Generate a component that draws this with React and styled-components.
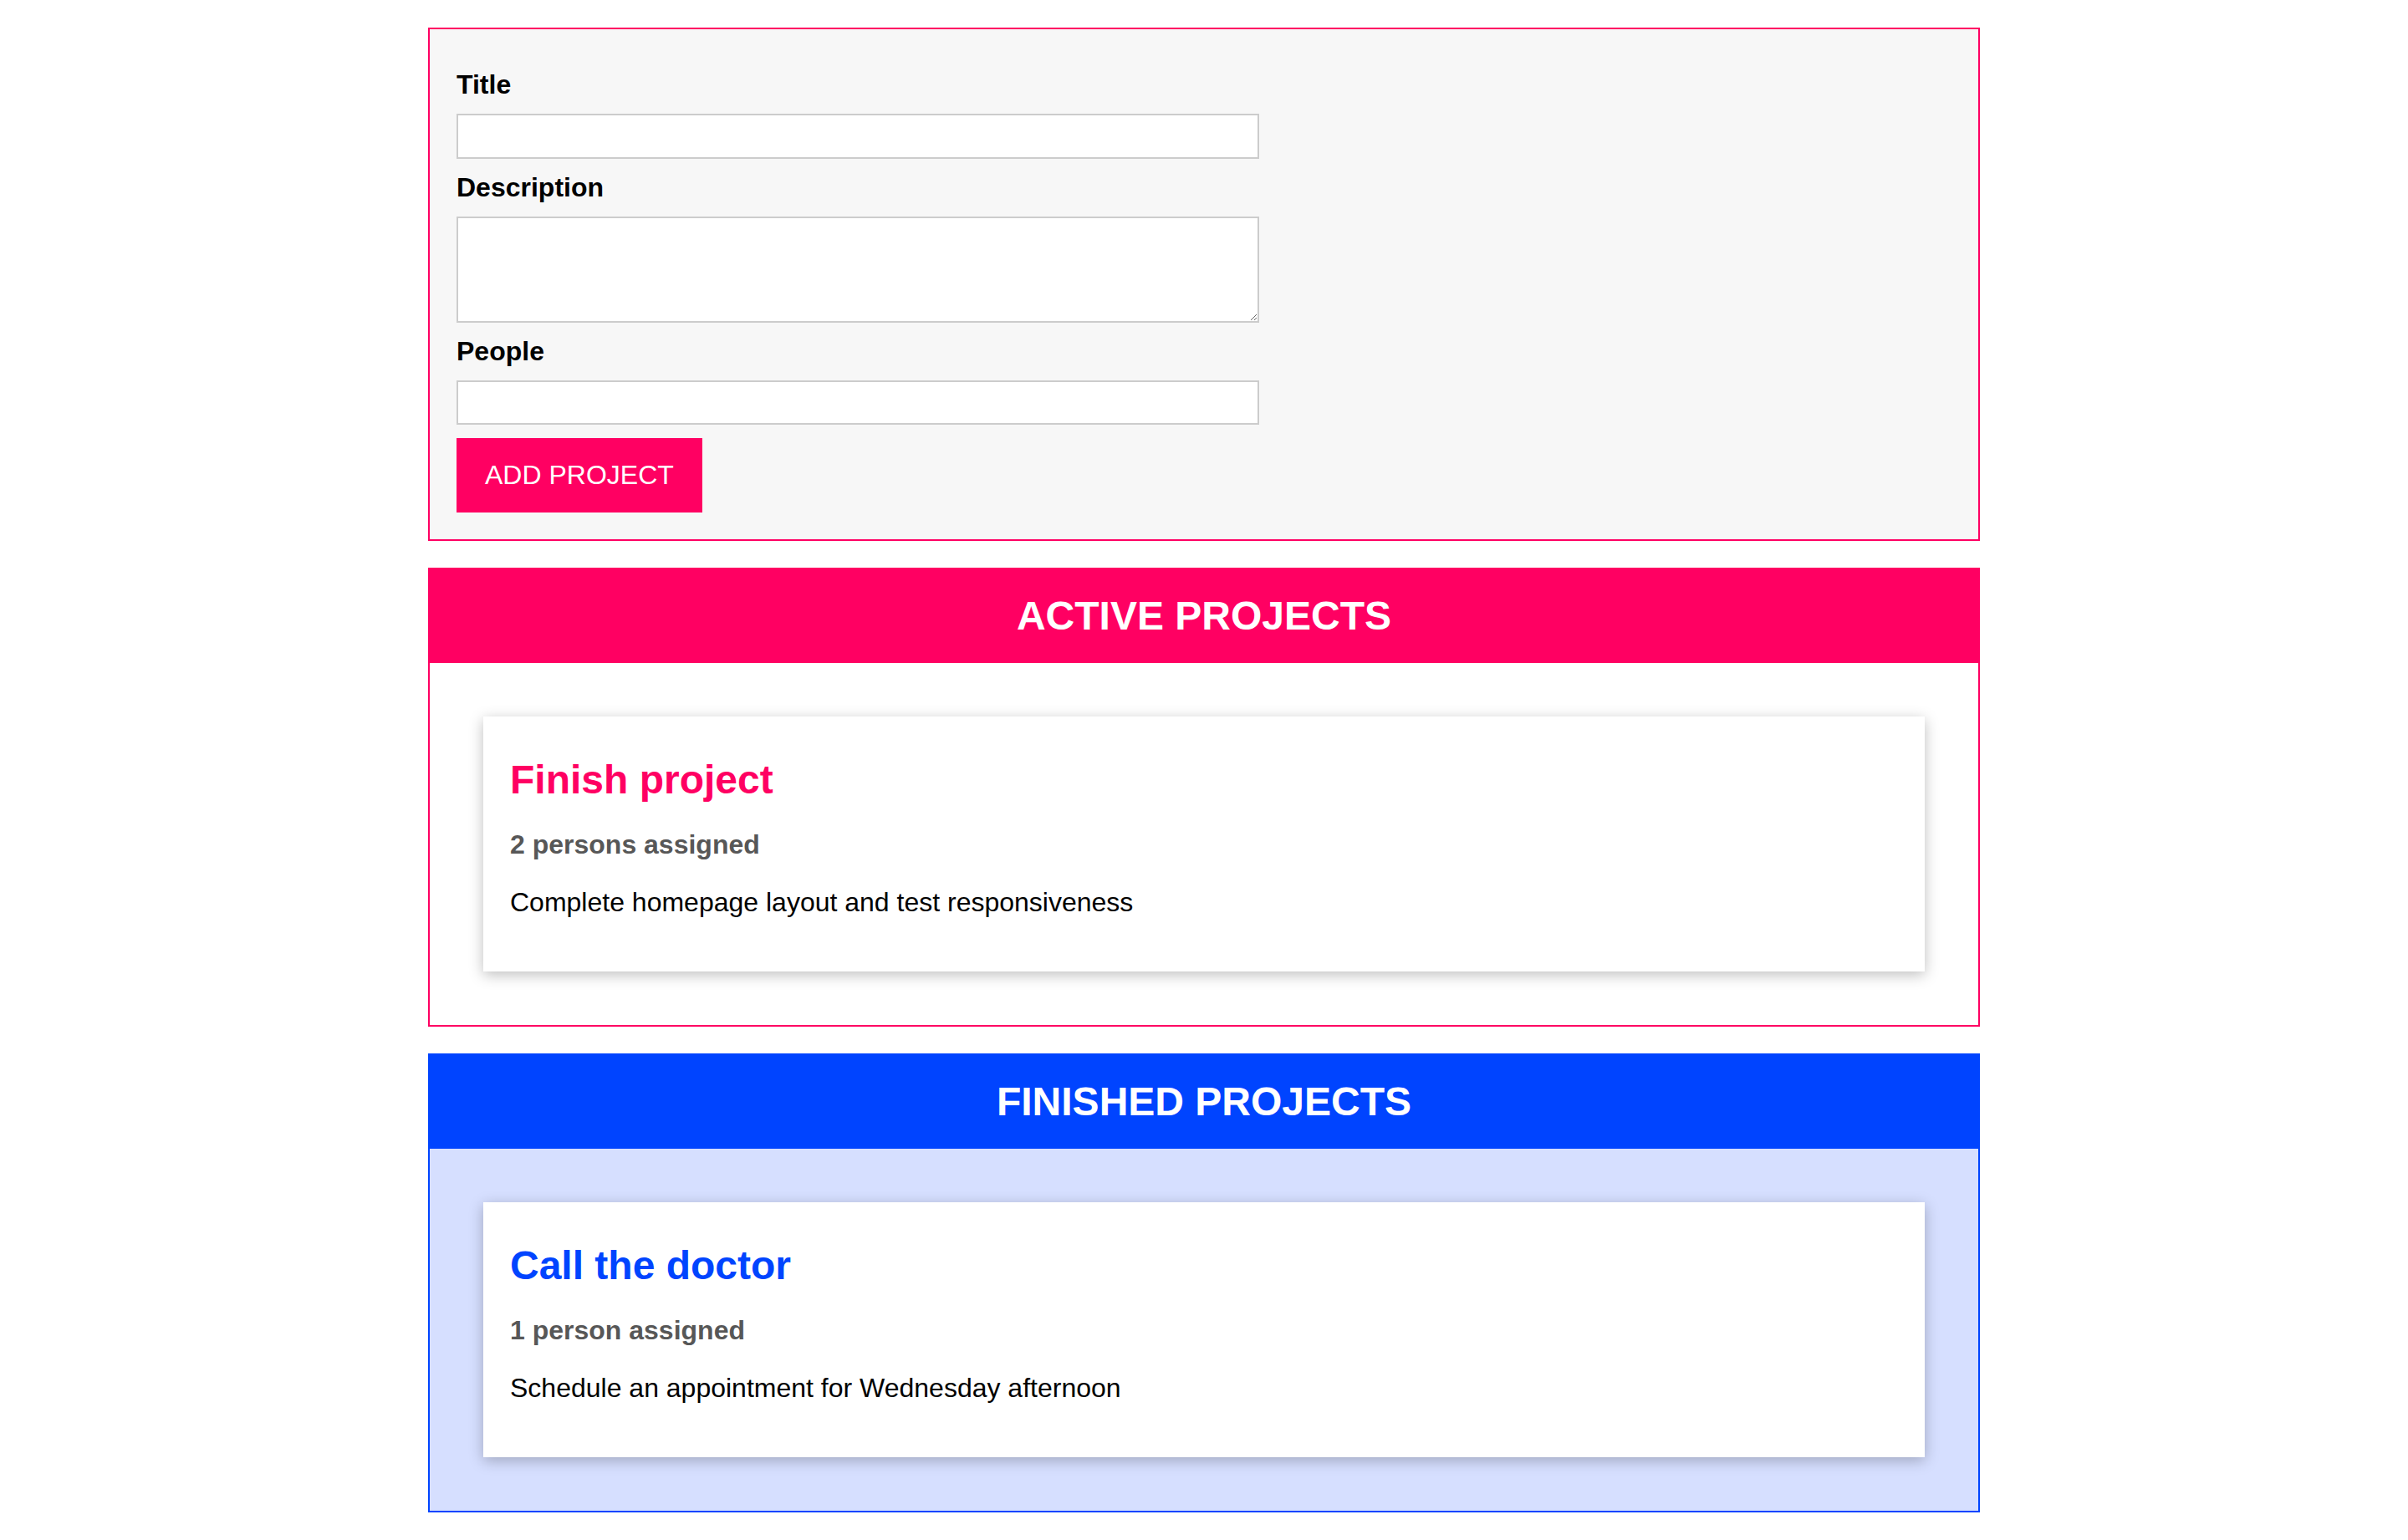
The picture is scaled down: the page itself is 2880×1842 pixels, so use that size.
import styled, { createGlobalStyle } from 'styled-components'

const GlobalStyle = createGlobalStyle`
  * { box-sizing: border-box; }
  html { font-family: "Liberation Sans", Arial, sans-serif; font-size: 32px; }
  body { margin: 0; background: #ffffff; }
`

const Page = styled.div`
  max-width: 1920px;
  margin: 0 auto;
  padding: 33px 32px 32px;
  display: flex;
  flex-direction: column;
  gap: 32px;
`

const InputForm = styled.form`
  display: flex;
  flex-direction: column;
  align-items: flex-start;
  gap: 16px;
  padding: 48px 32px 32px;
  border: 2px solid #ff0062;
  background: #f7f7f7;
`

const Label = styled.label`
  display: block;
  font-weight: bold;
  font-size: 32px;
  line-height: 37px;
  color: #000;
`

const fieldCss = `
  display: block;
  width: 100%;
  max-width: 960px;
  font: inherit;
  font-size: 32px;
  line-height: 36.8px;
  padding: 6.4px 12.8px;
  border: 2px solid #ccc;
  background: #fff;
  margin: 0;
  &:focus { outline: none; background: #fff5f9; }
`

const Input = styled.input`
  ${fieldCss}
`

const TextArea = styled.textarea`
  ${fieldCss}
  height: 127px;
`

const Button = styled.button`
  font: inherit;
  font-size: 32px;
  line-height: 36.8px;
  background: #ff0062;
  border: 2px solid #ff0062;
  color: #fff;
  padding: 24px 32px;
  cursor: pointer;
`

const Section = styled.section`
  border: 2px solid ${p => p.$color};
`

const Header = styled.header`
  height: 112px;
  background: ${p => p.$color};
  display: flex;
  justify-content: center;
  align-items: center;

  h2 {
    margin: 0;
    color: #fff;
    font-size: 48px;
    font-weight: bold;
  }
`

const List = styled.ul`
  list-style: none;
  margin: 0;
  padding: 32px;
  background: ${p => p.$bg};
`

const Card = styled.li`
  background: #fff;
  box-shadow: 0 4px 16px rgba(0, 0, 0, 0.26);
  padding: 32px;
  margin: 32px;

  h2 {
    color: ${p => p.$color};
    font-size: 48px;
    line-height: 55.2px;
    margin: 16px 0;
  }

  h3 {
    color: #575757;
    font-size: 32px;
    line-height: 36.8px;
    margin: 32px 0;
  }

  p {
    color: #000;
    font-size: 32px;
    line-height: 36.8px;
    margin: 32px 0;
  }
`

const ProjectList = ({ title, color, bg, projects }) => (
  <Section $color={color}>
    <Header $color={color}>
      <h2>{title}</h2>
    </Header>
    <List $bg={bg}>
      {projects.map(p => (
        <Card key={p.title} $color={color}>
          <h2>{p.title}</h2>
          <h3>{p.people === 1 ? '1 person assigned' : `${p.people} persons assigned`}</h3>
          <p>{p.description}</p>
        </Card>
      ))}
    </List>
  </Section>
)

export default function App() {
  return (
    <>
      <GlobalStyle />
      <Page>
        <InputForm onSubmit={e => e.preventDefault()}>
          <Label htmlFor="title">Title</Label>
          <Input type="text" id="title" />
          <Label htmlFor="description">Description</Label>
          <TextArea id="description" rows={3} />
          <Label htmlFor="people">People</Label>
          <Input type="number" id="people" step="1" min="0" max="10" />
          <Button type="submit">ADD PROJECT</Button>
        </InputForm>
        <ProjectList
          title="ACTIVE PROJECTS"
          color="#ff0062"
          bg="#ffffff"
          projects={[{ title: 'Finish project', people: 2, description: 'Complete homepage layout and test responsiveness' }]}
        />
        <ProjectList
          title="FINISHED PROJECTS"
          color="#0044ff"
          bg="#d6dfff"
          projects={[{ title: 'Call the doctor', people: 1, description: 'Schedule an appointment for Wednesday afternoon' }]}
        />
      </Page>
    </>
  )
}
